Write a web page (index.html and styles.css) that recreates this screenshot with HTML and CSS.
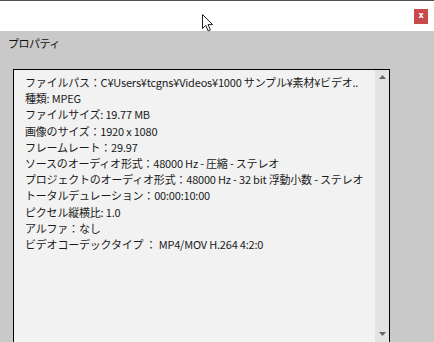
FILE: index.html
```html
<!DOCTYPE html>
<html>
<head>
<meta charset="utf-8">
<link rel="stylesheet" href="styles.css">
</head>
<body>
<div class="window">
  <div class="titlebar">
    <div class="close">x</div>
  </div>
  <div class="panel">
    <div class="caption">プロパティ</div>
    <div class="listbox">
      <div class="lines">
        <div class="line">ファイルパス：C¥Users¥tcgns¥Videos¥1000 サンプル¥素材¥ビデオ..</div>
        <div class="line">種類: MPEG</div>
        <div class="line">ファイルサイズ: 19.77 MB</div>
        <div class="line">画像のサイズ：1920 x 1080</div>
        <div class="line">フレームレート：29.97</div>
        <div class="line">ソースのオーディオ形式：48000 Hz - 圧縮 - ステレオ</div>
        <div class="line">プロジェクトのオーディオ形式：48000 Hz - 32 bit 浮動小数 - ステレオ</div>
        <div class="line">トータルデュレーション：00:00:10:00</div>
        <div class="line">ピクセル縦横比: 1.0</div>
        <div class="line">アルファ：なし</div>
        <div class="line">ビデオコーデックタイプ ： MP4/MOV H.264 4:2:0</div>
      </div>
      <div class="scrollbar">
        <svg class="arrow" width="7" height="4" viewBox="0 0 7 4"><polygon points="0,4 7,4 3.5,0" fill="#666"/></svg>
        <svg class="arrow" width="7" height="4" viewBox="0 0 7 4"><polygon points="0,0 7,0 3.5,4" fill="#666"/></svg>
      </div>
    </div>
  </div>
  <svg class="cursor" width="14" height="20" viewBox="0 0 14 20">
    <path d="M1.5 1.5 L1.5 15.5 L4.8 12.4 L7.2 18 L9.4 17 L7.1 11.6 L11.6 11.6 Z" fill="#fff" stroke="#222" stroke-width="1" stroke-linejoin="round"/>
  </svg>
</div>
</body>
</html>
```

FILE: styles.css
```css
html, body {
  margin: 0;
  padding: 0;
  width: 434px;
  height: 342px;
  overflow: hidden;
  font-family: "Noto Sans CJK JP", "DejaVu Sans", sans-serif;
}
.window {
  position: relative;
  width: 434px;
  height: 342px;
  display: flex;
  flex-direction: column;
  background: #c9c9c9;
  border-top: 1px solid #505050;
  box-sizing: border-box;
}
.titlebar {
  height: 30px;
  background: #ffffff;
  display: flex;
  justify-content: flex-end;
  align-items: flex-start;
  padding: 8px 6px 0 0;
  box-sizing: border-box;
}
.close {
  width: 14px;
  height: 15px;
  background: #c84b4b;
  color: #fff;
  font-family: "DejaVu Sans", sans-serif;
  font-size: 8px;
  font-weight: bold;
  line-height: 14px;
  text-align: center;
}
.panel {
  flex: 1;
  display: flex;
  flex-direction: column;
  padding: 0 0 0 13px;
}
.caption {
  font-size: 11px;
  color: #111;
  margin: 4px 0 0 -5px;
  height: 16px;
  line-height: 16px;
  letter-spacing: -0.5px;
}
.listbox {
  margin-top: 18px;
  width: 377px;
  flex: 1;
  border: 1px solid #000;
  border-bottom: none;
  background: #f2f2f2;
  display: flex;
  box-sizing: border-box;
}
.lines {
  flex: 1;
  padding: 4px 0 0 11px;
  font-size: 11px;
  color: #1a1a1a;
  letter-spacing: -0.2px;
}
.line {
  height: 16.2px;
  line-height: 16px;
  white-space: nowrap;
}
.scrollbar {
  width: 14px;
  background: #e3e3e3;
  display: flex;
  flex-direction: column;
  justify-content: space-between;
  align-items: center;
  padding: 5px 0 6px;
}
.arrow {
  display: block;
}
.cursor {
  position: absolute;
  left: 201px;
  top: 12px;
}
```
